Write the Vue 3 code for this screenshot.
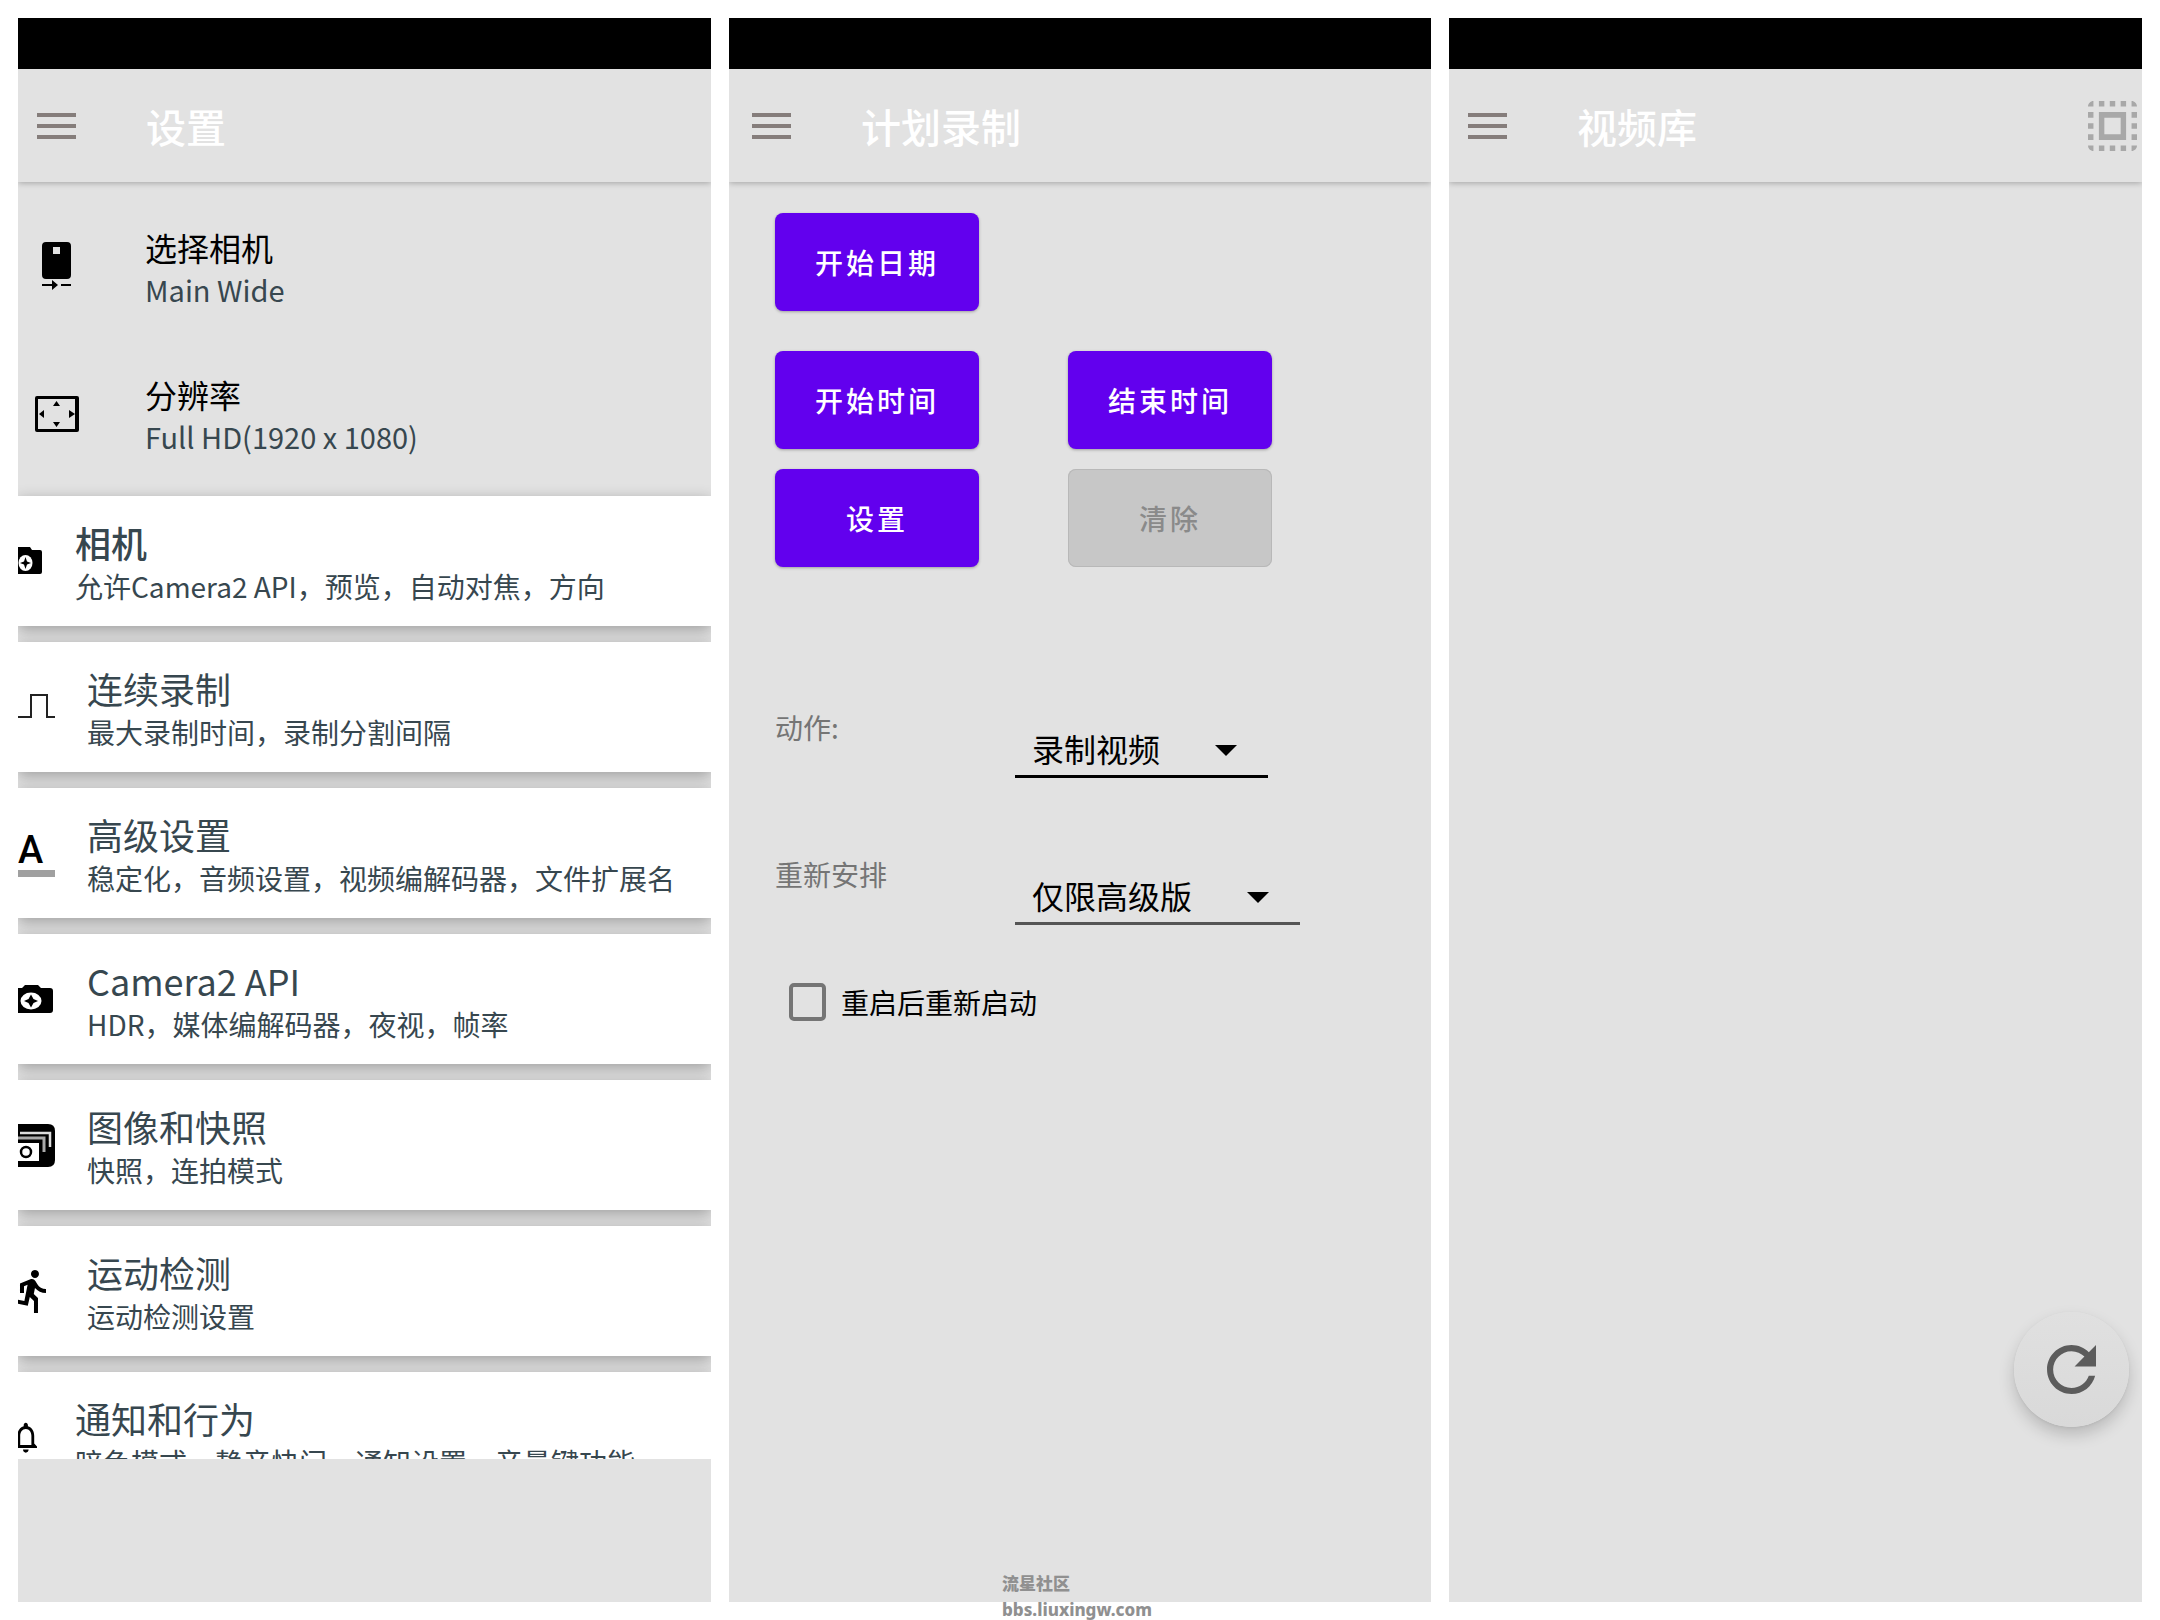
<script setup>
import { ref } from 'vue'

const rows = [
  { icon: 'phone', title: '选择相机', sub: 'Main Wide' },
  { icon: 'resolution', title: '分辨率', sub: 'Full HD(1920 x 1080)' },
]

const cards = [
  { icon: 'camera', title: '相机', sub: '允许Camera2 API，预览，自动对焦，方向', near: true, strong: true },
  { icon: 'pulse', title: '连续录制', sub: '最大录制时间，录制分割间隔' },
  { icon: 'letter', title: '高级设置', sub: '稳定化，音频设置，视频编解码器，文件扩展名' },
  { icon: 'camera2', title: 'Camera2 API', sub: 'HDR，媒体编解码器，夜视，帧率' },
  { icon: 'gallery', title: '图像和快照', sub: '快照，连拍模式' },
  { icon: 'run', title: '运动检测', sub: '运动检测设置' },
  { icon: 'bell', title: '通知和行为', sub: '暗色模式，静音快门，通知设置，音量键功能', near: true },
]

const action = ref('record')
const repeat = ref('premium')
const restart = ref(false)
</script>

<template>
  <main class="page">
    <section class="panel">
      <div class="status"></div>
      <header class="bar">
        <button class="burger" type="button" aria-label="菜单"><i></i><i></i><i></i></button>
        <h1>设置</h1>
      </header>
      <div class="scroller">
        <ul class="rows">
          <li v-for="row in rows" :key="row.title" class="row">
            <svg v-if="row.icon === 'phone'" class="row-icon" viewBox="0 0 48 60" aria-hidden="true">
              <path fill-rule="evenodd" d="M13 2H34Q38 2 38 6V35Q38 39 34 39H13Q9 39 9 35V6Q9 2 13 2ZM20 7V14H27V7Z" />
              <path d="M9 44H19V40L25 45L19 50V46H9ZM28 44H38V46H28Z" />
            </svg>
            <svg v-else class="row-icon" viewBox="0 0 48 60" aria-hidden="true">
              <path fill-rule="evenodd" d="M4 9H44Q46 9 46 11V43Q46 45 44 45H4Q2 45 2 43V11Q2 9 4 9ZM5 12V42H42V12Z" />
              <path d="M23.500 14L27 19H20ZM23.500 40L27 35H20ZM6 27L11 23V31ZM42 27L36 23V31Z" />
            </svg>
            <div class="texts">
              <div class="row-title">{{ row.title }}</div>
              <div class="row-sub">{{ row.sub }}</div>
            </div>
          </li>
        </ul>
        <ul class="cards">
          <li v-for="card in cards" :key="card.title" class="card" :class="{ near: card.near, strong: card.strong }">
            <svg class="card-icon" viewBox="0 0 38 60" aria-hidden="true">
              <template v-if="card.icon === 'camera'">
                <path d="M0 16H12L14 19H22Q24 19 24 21V41Q24 43 22 43H0Z" />
                <ellipse cx="7.500" cy="32" rx="7" ry="8" fill="#fff" />
                <path d="M7.500 26L9 30.500L13 32L9 33.500L7.500 38L6 33.500L2 32L6 30.500Z" />
              </template>
              <template v-else-if="card.icon === 'pulse'">
                <path d="M0 40H13V18H29V40H37" fill="none" stroke="#222" stroke-width="2" />
              </template>
              <template v-else-if="card.icon === 'letter'">
                <text x="0" y="40" class="letter">A</text>
                <rect x="0" y="47" width="37" height="7" fill="#a0a0a0" />
              </template>
              <template v-else-if="card.icon === 'camera2'">
                <path d="M0 19H4L7 16H20L23 19H32Q35 19 35 22V41Q35 44 32 44H0Z" />
                <ellipse cx="13" cy="32" rx="10.500" ry="8.500" fill="#fff" />
                <path d="M13 25.500L15.500 30L20 32L15.500 34L13 38.500L10.500 34L6 32L10.500 30Z" />
              </template>
              <template v-else-if="card.icon === 'gallery'">
                <path d="M0 9H30Q37 9 37 16V45Q37 52 30 52H0Z" />
                <path d="M2 18H32V32" fill="none" stroke="#ddd" stroke-width="2.500" />
                <path d="M0 23H26V37" fill="none" stroke="#aaa" stroke-width="3" />
                <path d="M0 28H21V46H0Z" fill="#fff" />
                <circle cx="8" cy="37" r="5" fill="none" stroke="#000" stroke-width="2.500" />
              </template>
              <path
                v-else-if="card.icon === 'run'"
                transform="translate(-10 6) scale(2)"
                d="M13.49 5.48c1.1 0 2-.9 2-2s-.9-2-2-2-2 .9-2 2 .9 2 2 2zm-3.6 13.9l1-4.4 2.1 2v6h2v-7.500l-2.100-2 .6-3c1.300 1.500 3.300 2.500 5.500 2.500v-2c-1.900 0-3.500-1-4.300-2.400l-1-1.600c-.4-.6-1-1-1.700-1-.3 0-.5.1-.8.1l-5.200 2.200v4.700h2v-3.400l1.800-.7-1.600 8.100-4.900-1-.4 2 7 1.400z"
              />
              <path
                v-else
                transform="translate(-9 12) scale(1.4 1.53)"
                d="M12 22c1.100 0 2-.9 2-2h-4c0 1.100.9 2 2 2zm6-6v-5c0-3.070-1.630-5.640-4.500-6.320V4c0-.83-.67-1.500-1.500-1.500s-1.500.67-1.500 1.500v.68C7.640 5.360 6 7.920 6 11v5l-2 2v1h16v-1l-2-2zm-2 1H8v-6c0-2.480 1.510-4.500 4-4.500s4 2.020 4 4.500v6z"
              />
            </svg>
            <div class="texts">
              <div class="card-title">{{ card.title }}</div>
              <div class="card-sub">{{ card.sub }}</div>
            </div>
          </li>
        </ul>
      </div>
    </section>

    <section class="panel wide">
      <div class="status"></div>
      <header class="bar">
        <button class="burger" type="button" aria-label="菜单"><i></i><i></i><i></i></button>
        <h1>计划录制</h1>
      </header>
      <form class="plan" @submit.prevent>
        <button class="btn" type="button">开始日期</button>
        <div class="btn-grid">
          <button class="btn" type="button">开始时间</button>
          <button class="btn" type="button">结束时间</button>
          <button class="btn" type="button">设置</button>
          <button class="btn" type="button" disabled>清除</button>
        </div>
        <div class="fields">
          <div class="field">
            <label for="action">动作:</label>
            <span class="drop">
              <select id="action" v-model="action">
                <option value="record">录制视频</option>
              </select>
            </span>
          </div>
          <div class="field">
            <label for="repeat">重新安排</label>
            <span class="drop muted">
              <select id="repeat" v-model="repeat">
                <option value="premium">仅限高级版</option>
              </select>
            </span>
          </div>
        </div>
        <label class="check">
          <input v-model="restart" type="checkbox" />
          <span>重启后重新启动</span>
        </label>
      </form>
    </section>

    <section class="panel">
      <div class="status"></div>
      <header class="bar">
        <button class="burger" type="button" aria-label="菜单"><i></i><i></i><i></i></button>
        <h1>视频库</h1>
        <button class="select-all" type="button" aria-label="全选">
          <svg viewBox="3 3 18 18" preserveAspectRatio="none" aria-hidden="true">
            <path d="M3 5h2V3c-1.100 0-2 .9-2 2zm0 8h2v-2H3v2zm4 8h2v-2H7v2zM3 9h2V7H3v2zm10-6h-2v2h2V3zm6 0v2h2c0-1.100-.9-2-2-2zM5 21v-2H3c0 1.100.9 2 2 2zm-2-4h2v-2H3v2zM9 3H7v2h2V3zm2 18h2v-2h-2v2zm8-8h2v-2h-2v2zm0 8c1.100 0 2-.9 2-2h-2v2zm0-12h2V7h-2v2zm0 8h2v-2h-2v2zm-4 4h2v-2h-2v2zm0-16h2V3h-2v2zM7 17h10V7H7v10zm2-8h6v6H9V9z" />
          </svg>
        </button>
      </header>
      <button class="fab" type="button" aria-label="刷新">
        <svg viewBox="4 4 16 16" aria-hidden="true">
          <path d="M17.650 6.350C16.200 4.900 14.210 4 12 4c-4.420 0-7.990 3.580-7.990 8s3.570 8 7.990 8c3.730 0 6.840-2.550 7.730-6h-2.080c-.82 2.330-3.040 4-5.650 4-3.310 0-6-2.690-6-6s2.690-6 6-6c1.660 0 3.140.69 4.220 1.780L13 11h7V4l-2.350 2.350z" />
        </svg>
      </button>
    </section>

    <footer class="mark">
      <span>流星社区</span>
      <span>bbs.liuxingw.com</span>
    </footer>
  </main>
</template>

<style>
body {
  margin: 0;
  background: #fff;
}
</style>

<style scoped>
.page {
  position: relative;
  box-sizing: border-box;
  display: grid;
  grid-template-columns: 77fr 78fr 77fr;
  grid-template-rows: minmax(0, 1fr);
  gap: 18px;
  height: 100vh;
  padding: 18px;
  font-family: "Noto Sans CJK SC", "Noto Sans", sans-serif;
  color: #000;
}

button {
  border: 0;
  padding: 0;
  font: inherit;
}

.panel {
  position: relative;
  display: flex;
  flex-direction: column;
  min-width: 0;
  background: #e2e2e2;
  overflow: hidden;
}

.status {
  flex: none;
  height: 51px;
  background: #000;
}

.bar {
  position: relative;
  flex: none;
  box-sizing: border-box;
  display: flex;
  align-items: center;
  height: 113px;
  padding: 0 5px 0 19px;
  background: #e2e2e2;
  box-shadow: 0 1px 6px rgba(0, 0, 0, 0.28);
}

.wide .bar {
  padding-left: 23px;
}

.burger {
  display: flex;
  flex-direction: column;
  gap: 7px;
  width: 39px;
  background: none;
}

.burger i {
  height: 4px;
  background: #857d7b;
}

h1 {
  margin: 0 0 0 70px;
  font-size: 40px;
  line-height: 56px;
  font-weight: 500;
  color: #fff;
}

.scroller {
  flex: 1;
  min-height: 0;
  margin-bottom: 143px;
  overflow: hidden;
}

ul {
  margin: 0;
  padding: 0;
  list-style: none;
}

.rows {
  padding: 14px 0 6px;
}

.row {
  display: flex;
  align-items: center;
  height: 147px;
}

.row-icon {
  flex: none;
  width: 48px;
  height: 60px;
  margin: 0 64px 0 15px;
}

.texts {
  min-width: 0;
  white-space: nowrap;
}

.row .texts {
  padding-bottom: 4px;
}

.row-title {
  font-size: 32px;
  line-height: 42px;
}

.row-sub {
  font-size: 29px;
  line-height: 42px;
  color: #37474f;
}

.cards {
  display: flex;
  flex-direction: column;
  gap: 16px;
}

.card {
  display: flex;
  align-items: center;
  height: 130px;
  background: #fff;
  box-shadow: 0 4px 14px rgba(0, 0, 0, 0.3);
}

.card .texts {
  padding-top: 6px;
}

.card-icon {
  flex: none;
  width: 38px;
  height: 60px;
  margin-right: 31px;
}

.near .card-icon {
  margin-right: 19px;
}

.letter {
  font: 500 38px Roboto, sans-serif;
}

.card-title {
  font-size: 36px;
  line-height: 44px;
  color: #37474f;
}

.strong .card-title {
  font-weight: 500;
}

.card-sub {
  font-size: 28px;
  line-height: 44px;
  color: #37474f;
}

.plan {
  padding: 31px 46px;
}

.btn {
  display: block;
  width: 204px;
  height: 98px;
  border-radius: 8px;
  background: #6200ee;
  color: #fff;
  font-size: 28px;
  font-weight: 500;
  letter-spacing: 3px;
  box-shadow: 0 1px 3px rgba(0, 0, 0, 0.3);
}

.btn:disabled {
  background: #c7c7c7;
  color: #8a8a8a;
  box-shadow: inset 0 0 0 1px #b8b8b8;
}

.btn-grid {
  display: grid;
  grid-template-columns: 204px 204px;
  gap: 20px 89px;
  margin-top: 40px;
}

.fields {
  display: flex;
  flex-direction: column;
  gap: 75px;
  margin-top: 139px;
}

.field {
  display: flex;
  align-items: flex-start;
}

.field label {
  width: 240px;
  font-size: 28px;
  line-height: 42px;
  color: #757575;
}

.drop {
  position: relative;
  display: flex;
  margin-top: 18px;
}

.drop::after {
  content: "";
  position: absolute;
  top: 21px;
  right: 31px;
  border: 11px solid transparent;
  border-top-color: #000;
  border-bottom: 0;
  pointer-events: none;
}

select {
  appearance: none;
  box-sizing: border-box;
  height: 54px;
  margin: 0;
  padding: 0 107px 4px 17px;
  border: 0;
  border-bottom: 3px solid #000;
  border-radius: 0;
  background: none;
  color: #000;
  font: inherit;
  font-size: 32px;
}

.muted select {
  border-bottom-color: #555;
}

.check {
  display: flex;
  align-items: center;
  gap: 15px;
  margin: 58px 0 0 14px;
  font-size: 28px;
  line-height: 38px;
}

.check input {
  appearance: none;
  box-sizing: border-box;
  width: 37px;
  height: 38px;
  margin: 0;
  border: 4px solid #757575;
  border-radius: 5px;
}

.check input:checked {
  background: #757575;
}

.select-all {
  width: 49px;
  height: 50px;
  margin-left: auto;
  background: none;
}

.select-all svg {
  display: block;
  width: 100%;
  height: 100%;
  fill: #a8a8a8;
}

.fab {
  position: absolute;
  right: 13px;
  bottom: 175px;
  display: grid;
  place-items: center;
  width: 115px;
  height: 115px;
  border-radius: 50%;
  background: linear-gradient(#e0e0e0, #d9d9d9);
  box-shadow: 0 8px 16px rgba(0, 0, 0, 0.18), 0 1px 3px rgba(0, 0, 0, 0.06);
}

.fab svg {
  width: 49px;
  height: 49px;
  fill: #5c5c5c;
}

.mark {
  position: absolute;
  left: 1002px;
  bottom: 0;
  display: flex;
  flex-direction: column;
  gap: 6px;
  font-family: "Noto Sans", "Noto Sans CJK SC", sans-serif;
  font-size: 17px;
  line-height: 20px;
  font-weight: 800;
  color: #909090;
}
</style>
